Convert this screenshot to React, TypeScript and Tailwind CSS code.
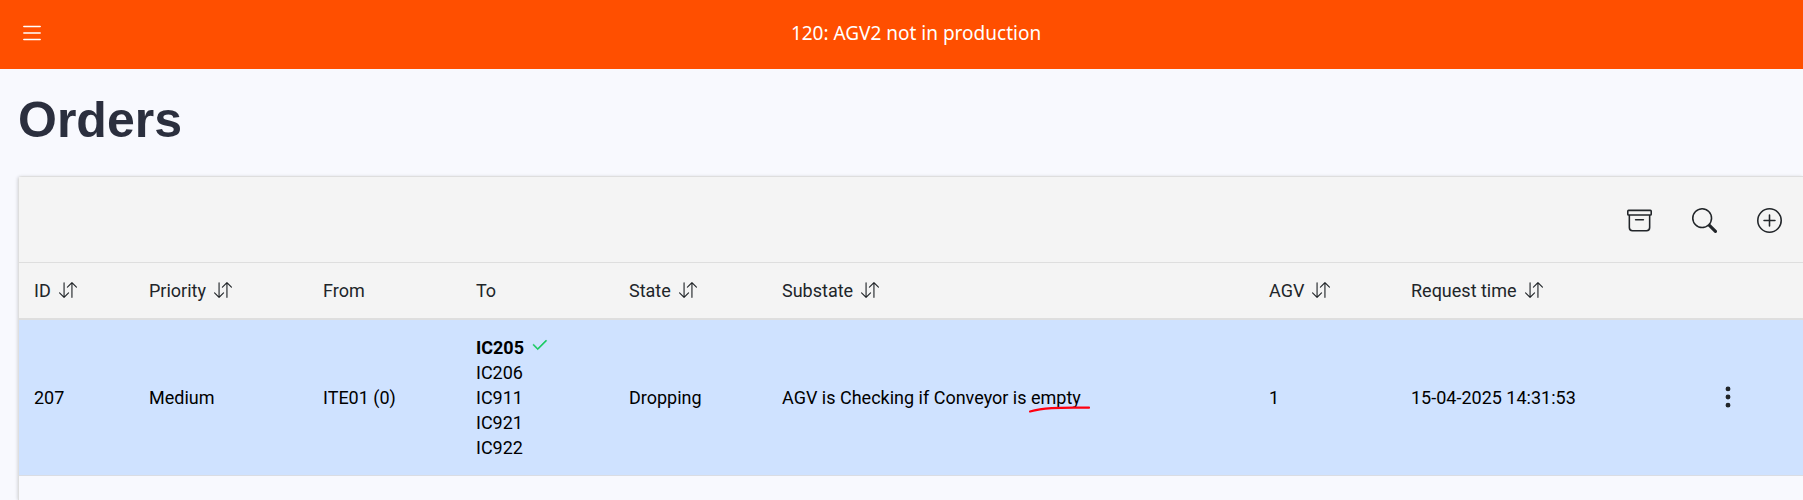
import React from "react";
import {
  BsArchive,
  BsArrowDownUp,
  BsCheck2,
  BsList,
  BsPlusCircle,
  BsSearch,
  BsThreeDotsVertical,
} from "react-icons/bs";

type Column = { label: string; width: string; sortable: boolean };

const columns: Column[] = [
  { label: "ID", width: "w-[115px]", sortable: true },
  { label: "Priority", width: "w-[174px]", sortable: true },
  { label: "From", width: "w-[153px]", sortable: false },
  { label: "To", width: "w-[153px]", sortable: false },
  { label: "State", width: "w-[153px]", sortable: true },
  { label: "Substate", width: "", sortable: true },
  { label: "AGV", width: "w-[142px]", sortable: true },
  { label: "Request time", width: "w-[304px]", sortable: true },
];

const destinations = ["IC206", "IC911", "IC921", "IC922"];

function TopBar() {
  return (
    <header className="flex h-[69px] items-center bg-[#ff4f00] pl-[19px] text-white">
      <button type="button" aria-label="Menu" className="-mt-1">
        <BsList size={26} />
      </button>
      <p className="-mt-1 grow pr-4 text-center font-['Noto_Sans',sans-serif] text-[19px] leading-7">
        120: AGV2 not in production
      </p>
    </header>
  );
}

function Toolbar() {
  return (
    <div className="flex h-[85px] items-center justify-end gap-10 bg-[#f4f4f4] pt-0.5 pr-[21px] text-[#212529]">
      <button type="button" aria-label="Archive">
        <BsArchive size={25} />
      </button>
      <button type="button" aria-label="Search">
        <BsSearch size={25} />
      </button>
      <button type="button" aria-label="Add order">
        <BsPlusCircle size={25} />
      </button>
    </div>
  );
}

function OrdersTable() {
  return (
    <table className="w-full table-fixed border-collapse text-left text-lg leading-[25px]">
      <thead className="bg-[#f4f4f4] text-[#212529]">
        <tr className="h-14 border-t border-b-2 border-t-[#dedede] border-b-[#dedede]">
          {columns.map((c) => (
            <th key={c.label} scope="col" className={`px-[15px] font-normal ${c.width}`}>
              {c.sortable ? (
                <button type="button" className="flex items-center gap-2">
                  {c.label}
                  <BsArrowDownUp size={18} />
                </button>
              ) : (
                c.label
              )}
            </th>
          ))}
          <th scope="col" aria-label="Actions" className="w-[103px]" />
        </tr>
      </thead>
      <tbody className="text-black">
        <tr className="border-b border-[#dadde4] bg-[#cfe2ff]">
          <td className="px-[15px]">207</td>
          <td className="px-[15px]">Medium</td>
          <td className="px-[15px]">ITE01 (0)</td>
          <td className="px-[15px] py-[15px]">
            <div className="flex items-center gap-1.5 font-bold">
              IC205
              <BsCheck2
                size={19}
                strokeWidth={0.4}
                className="-mt-1 text-[#14c95c]"
                aria-label="Done"
              />
            </div>
            {destinations.map((d) => (
              <div key={d}>{d}</div>
            ))}
          </td>
          <td className="px-[15px]">Dropping</td>
          <td className="px-[15px]">
            AGV is Checking if Conveyor is{" "}
            <span className="relative">
              empty
              <svg
                className="absolute -bottom-1.5 -left-0.5 h-2 w-[62px] overflow-visible"
                viewBox="0 0 62 8"
                fill="none"
                aria-hidden="true"
              >
                <path
                  d="M1 5.5C13 2 27 1.2 60 1.7"
                  stroke="#ff0010"
                  strokeWidth="2.2"
                  strokeLinecap="round"
                />
              </svg>
            </span>
          </td>
          <td className="px-[15px]">1</td>
          <td className="px-[15px]">15-04-2025 14:31:53</td>
          <td className="px-[15px] align-middle">
            <button type="button" aria-label="Order actions" className="block text-[#212529]">
              <BsThreeDotsVertical size={26} />
            </button>
          </td>
        </tr>
      </tbody>
    </table>
  );
}

export default function App() {
  return (
    <div className="flex min-h-screen flex-col bg-[#f8f9fe] font-[Roboto,sans-serif]">
      <TopBar />
      <main className="flex grow flex-col pl-[18px]">
        <h1 className="mt-[21px] mb-[26px] font-['Liberation_Sans',sans-serif] text-[50px] leading-[60px] font-bold text-[#2b2f3e]">
          Orders
        </h1>
        <section className="grow rounded-tl-sm border-t border-l border-[#dedede] shadow-[-1px_0_3px_rgba(0,0,0,0.12)]">
          <Toolbar />
          <OrdersTable />
        </section>
      </main>
    </div>
  );
}
